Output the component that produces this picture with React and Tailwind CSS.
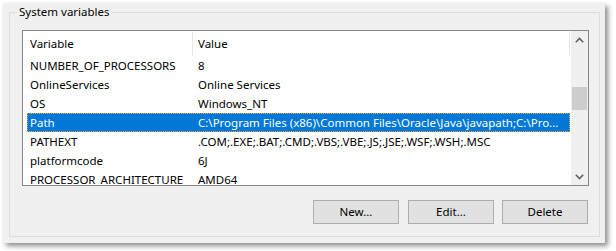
import React from "react";

const rows = [
  { name: "NUMBER_OF_PROCESSORS", value: "8" },
  { name: "OnlineServices", value: "Online Services" },
  { name: "OS", value: "Windows_NT" },
  {
    name: "Path",
    value: "C:\\Program Files (x86)\\Common Files\\Oracle\\Java\\javapath;C:\\Pro...",
    selected: true,
  },
  { name: "PATHEXT", value: ".COM;.EXE;.BAT;.CMD;.VBS;.VBE;.JS;.JSE;.WSF;.WSH;.MSC" },
  { name: "platformcode", value: "6J" },
  { name: "PROCESSOR_ARCHITECTURE", value: "AMD64" },
];

const Chevron = ({ down }) => (
  <svg width="9" height="6" viewBox="0 0 9 6" className={down ? "rotate-180" : ""}>
    <path d="M0.8 5.2 L4.5 1.5 L8.2 5.2" fill="none" stroke="#606060" strokeWidth="1.6" />
  </svg>
);

const Button = ({ children, className = "" }) => (
  <button className={`w-[86px] h-[24px] bg-[#e1e1e1] border border-[#adadad] text-[11.5px] text-black leading-none ${className}`}>
    {children}
  </button>
);

export default function App() {
  return (
    <div
      className="w-[616px] h-[251px] bg-white pt-[3px] pl-[3px] overflow-hidden"
      style={{ fontFamily: '"Noto Sans", sans-serif' }}
    >
      <div className="w-[602px] h-[240px] bg-[#f0f0f0] pt-[9px] pl-[6px] shadow-[3px_3px_5px_rgba(0,0,0,0.45)]">
        {/* group box */}
        <div className="relative w-[591px] h-[225px] border border-[#dcdcdc]">
          <span className="absolute -top-[8px] left-[7px] px-[2px] bg-[#f0f0f0] text-[11.5px] leading-[14px] text-black">
            System variables
          </span>

          <div className="ml-[12px] mt-[17px] w-[567px] h-[156px] border border-[#828790] bg-white flex">
            <div className="w-[548px] h-full overflow-hidden">
              {/* header */}
              <div className="h-[25px] flex items-stretch text-[11.5px] text-black">
                <div className="w-[169px] pl-[7px] flex items-center">Variable</div>
                <div className="w-px bg-[#e5e5e5] mt-[1px]" />
                <div className="w-[376px] pl-[5px] flex items-center">Value</div>
                <div className="w-px bg-[#e5e5e5] mt-[1px]" />
              </div>
              {rows.map((r) => (
                <div
                  key={r.name}
                  className={`ml-[4px] w-[543px] h-[19px] flex items-center text-[11.5px] whitespace-nowrap ${
                    r.selected
                      ? "bg-[#0078d7] text-white outline-1 outline-dotted outline-[#f7a33a] -outline-offset-1"
                      : "text-black"
                  }`}
                >
                  <div className="w-[166px] pl-[3px] overflow-hidden">{r.name}</div>
                  <div className="flex-1 pl-[5px] overflow-hidden">{r.value}</div>
                </div>
              ))}
            </div>
            {/* scrollbar */}
            <div className="w-[17px] h-full bg-[#f0f0f0] flex flex-col">
              <div className="h-[17px] flex items-center justify-center">
                <Chevron />
              </div>
              <div className="flex-1 relative">
                <div className="absolute left-[1px] right-[1px] top-[39px] h-[23px] bg-[#cdcdcd]" />
              </div>
              <div className="h-[17px] flex items-center justify-center">
                <Chevron down />
              </div>
            </div>
          </div>

          <div className="mt-[14px] flex justify-end pr-[11px]">
            <Button>New...</Button>
            <Button className="ml-[9px]">Edit...</Button>
            <Button className="ml-[8px]">Delete</Button>
          </div>
        </div>
      </div>
    </div>
  );
}
